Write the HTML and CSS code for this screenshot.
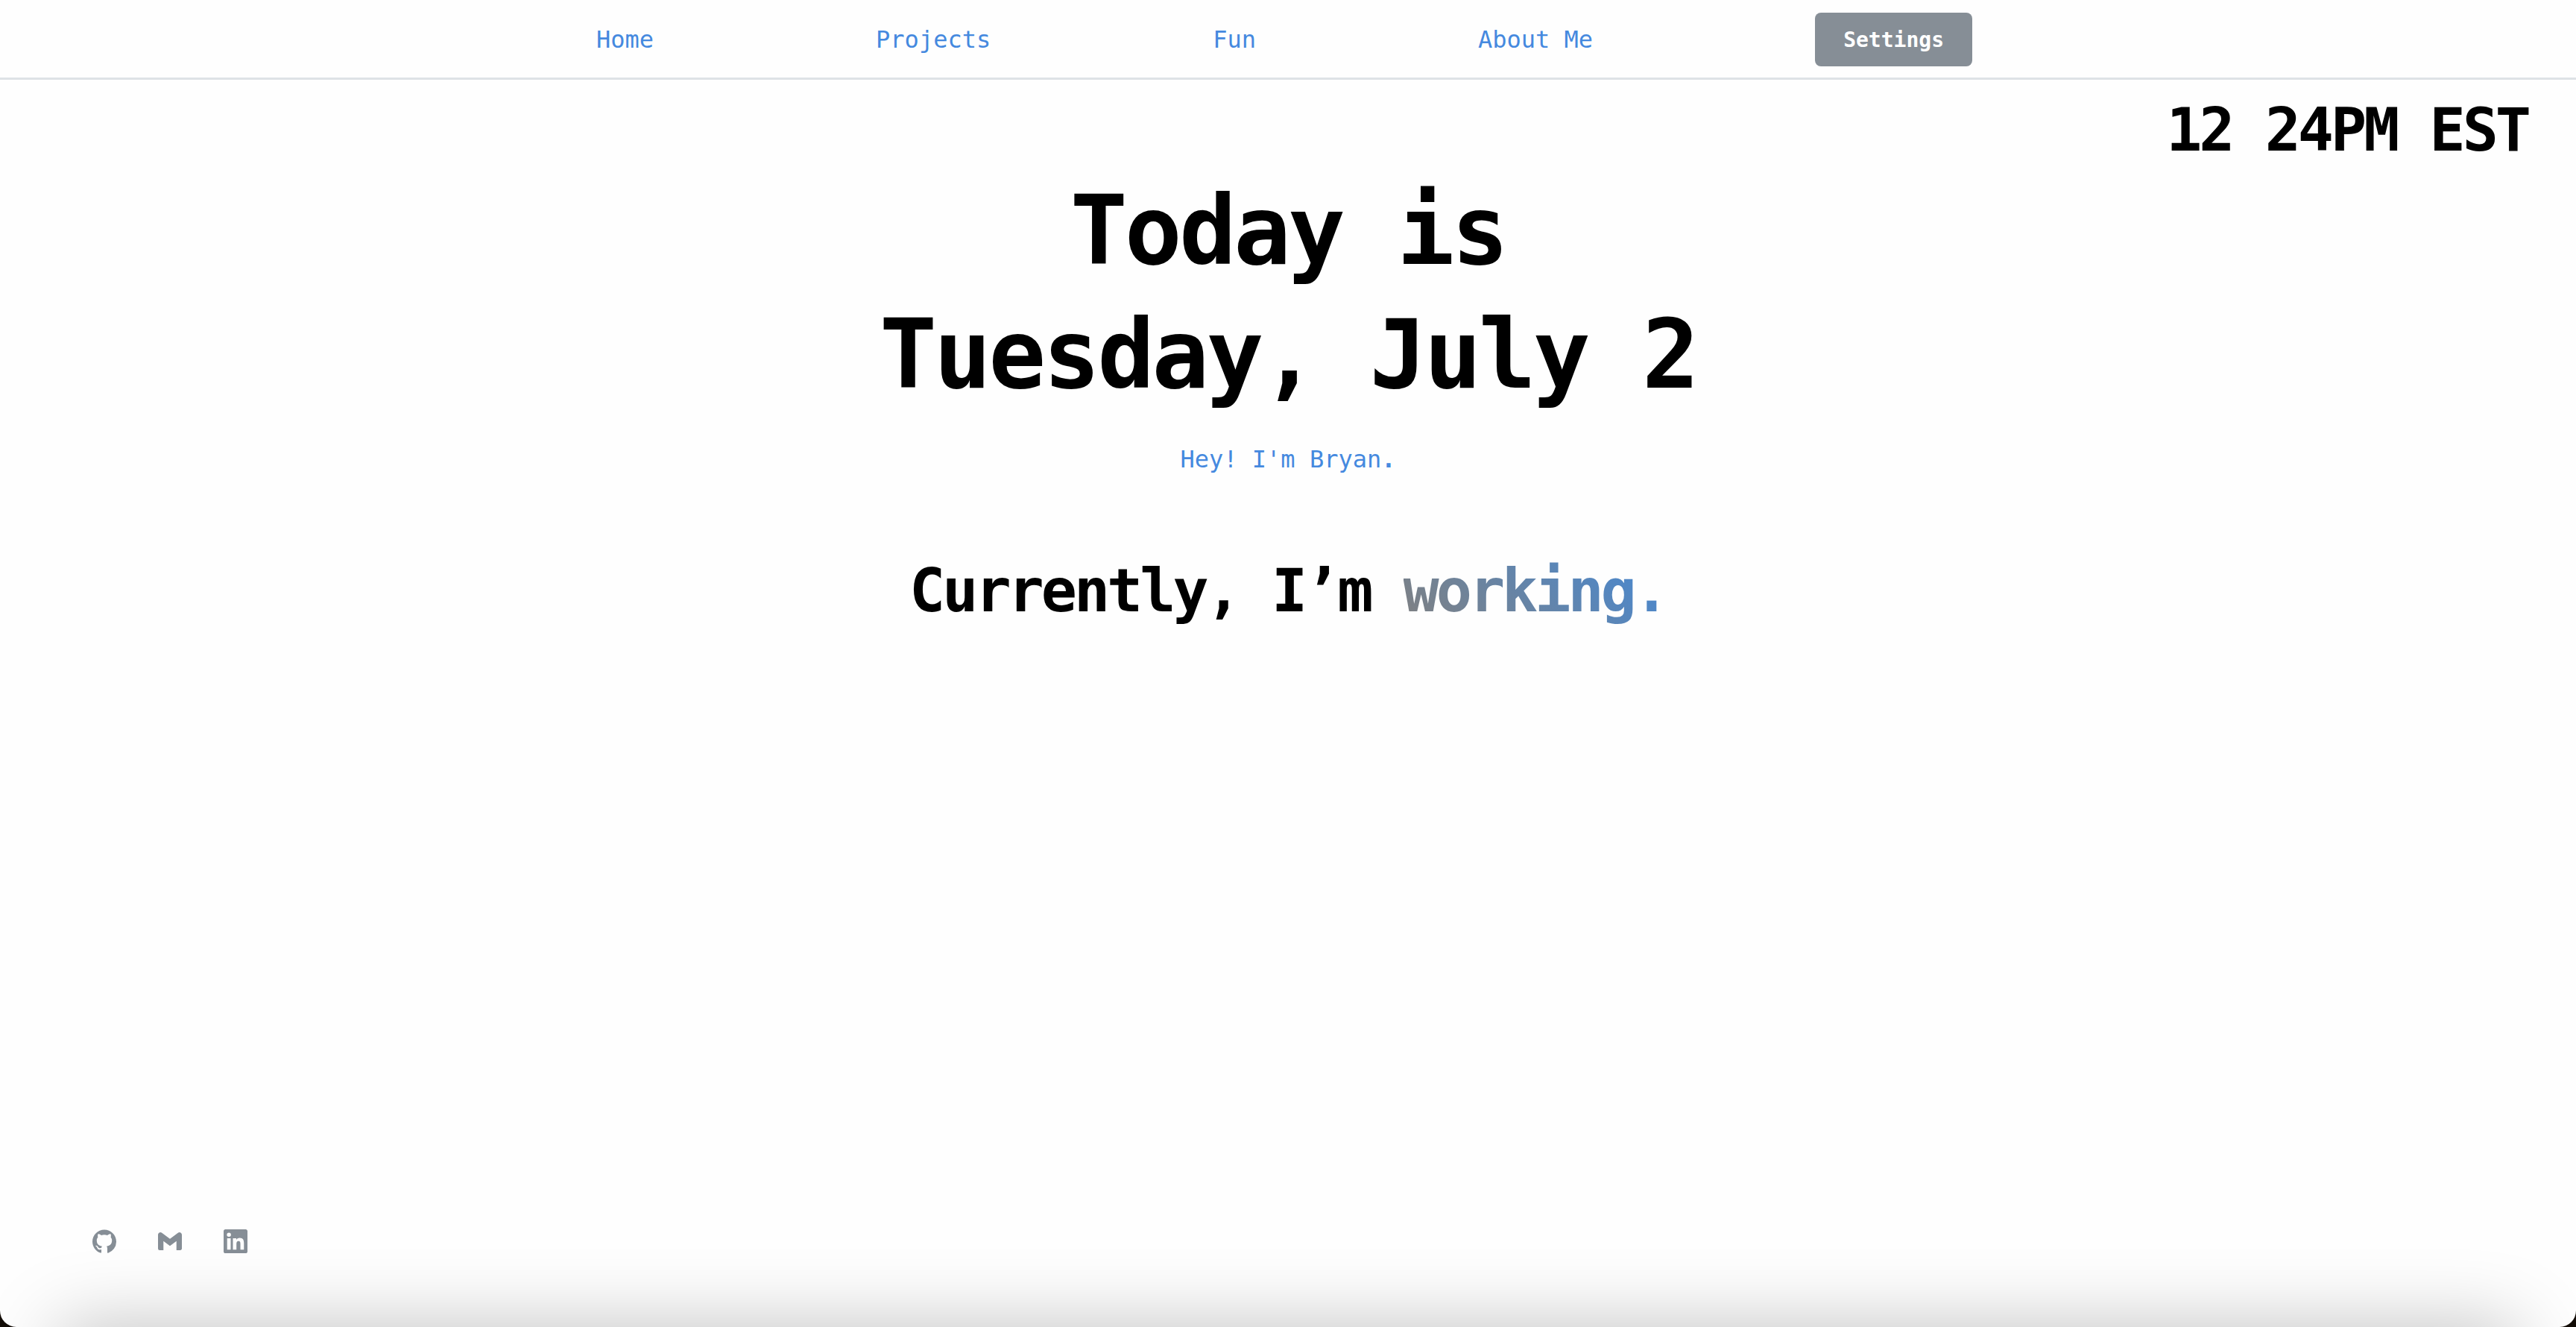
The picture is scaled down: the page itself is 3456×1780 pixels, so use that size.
FILE: index.html
```html
<!DOCTYPE html>
<html lang="en">
<head>
  <meta charset="utf-8">
  <title>Bryan</title>
  <link rel="stylesheet" href="styles.css">
</head>
<body>
  <div class="page">
    <header class="header">
      <nav class="nav">
        <a class="nav-link" href="#home">Home</a>
        <a class="nav-link" href="#projects">Projects</a>
        <a class="nav-link" href="#fun">Fun</a>
        <a class="nav-link" href="#about">About Me</a>
        <button class="settings" type="button">Settings</button>
      </nav>
    </header>
    <time class="clock">12 24PM EST</time>
    <main class="hero">
      <h1 class="title">Today is<br>Tuesday, July 2</h1>
      <p class="greeting">Hey! I'm Bryan<b>.</b></p>
      <h2 class="status">Currently, I’m <span class="activity">working.</span></h2>
    </main>
    <footer class="social">
      <a class="social-link" href="#github" aria-label="GitHub">
        <svg viewBox="0 0 24 24"><path d="M12 .3C5.37.3 0 5.67 0 12.3c0 5.3 3.44 9.8 8.2 11.38.5.1.8-.1.8-.5v-2.9c-3.34.72-4.04-1.42-4.04-1.42-.55-1.38-1.34-1.76-1.34-1.76-1.08-.74.09-.73.09-.73 1.2.09 1.84 1.24 1.84 1.24 1.07 1.83 2.8 1.3 3.49 1 .1-.78.42-1.31.76-1.61-2.66-.3-5.46-1.33-5.46-5.93 0-1.31.46-2.38 1.23-3.22-.12-.3-.53-1.52.12-3.17 0 0 1-.32 3.3 1.23a11.5 11.5 0 0 1 6.02 0c2.28-1.55 3.28-1.23 3.28-1.23.66 1.65.25 2.87.12 3.17.77.84 1.24 1.91 1.24 3.22 0 4.61-2.81 5.62-5.48 5.92.42.36.81 1.1.81 2.22v4c0 .36.22.69.82.57A12 12 0 0 0 24 12.3C24 5.67 18.63.3 12 .3z"/></svg>
      </a>
      <a class="social-link" href="#mail" aria-label="Gmail">
        <svg viewBox="0 0 24 24"><path d="M24 5.457v13.909c0 .904-.732 1.636-1.636 1.636h-3.819V11.73L12 16.64l-6.545-4.91v9.273H1.636A1.636 1.636 0 0 1 0 19.366V5.457c0-2.023 2.309-3.178 3.927-1.964L5.455 4.64 12 9.548l6.545-4.91 1.528-1.145C21.69 2.28 24 3.434 24 5.457z"/></svg>
      </a>
      <a class="social-link" href="#linkedin" aria-label="LinkedIn">
        <svg viewBox="0 0 24 24"><path d="M20.447 20.452h-3.554v-5.569c0-1.328-.027-3.037-1.852-3.037-1.853 0-2.136 1.445-2.136 2.939v5.667H9.351V9h3.414v1.561h.046c.477-.9 1.637-1.85 3.37-1.85 3.601 0 4.267 2.37 4.267 5.455v6.286zM5.337 7.433a2.062 2.062 0 0 1-2.063-2.065 2.064 2.064 0 1 1 2.063 2.065zm1.782 13.019H3.555V9h3.564v11.452zM22.225 0H1.771C.792 0 0 .774 0 1.729v20.542C0 23.227.792 24 1.771 24h20.451C23.2 24 24 23.227 24 22.271V1.729C24 .774 23.2 0 22.222 0h.003z"/></svg>
      </a>
    </footer>
    <div class="shade"></div>
  </div>
</body>
</html>
```
FILE: styles.css
```css
* {
  box-sizing: border-box;
}

body {
  margin: 0;
  background: #120c06;
  color: #000;
  font-family: "DejaVu Sans Mono", monospace;
  font-size: 32px;
}

.page {
  position: relative;
  display: flex;
  flex-direction: column;
  min-height: 100vh;
  overflow: hidden;
  background: #fefefe;
  border-radius: 0 0 22px 22px;
}

.header {
  border-bottom: 3px solid #dee2e6;
}

.nav {
  display: flex;
  align-items: center;
  justify-content: center;
  gap: 298px;
  padding: 17px 10px 15px 0;
}

.nav-link {
  color: #4589df;
  text-decoration: none;
}

.settings {
  height: 72px;
  padding: 0 38px;
  border: 0;
  border-radius: 8px;
  background: #868e96;
  color: #fff;
  font: bold 28px "DejaVu Sans Mono", monospace;
}

.clock {
  align-self: flex-end;
  margin-top: 16px;
  padding-right: 64px;
  font-size: 80px;
  font-weight: bold;
  line-height: 104px;
  letter-spacing: -4px;
}

.hero {
  flex: 1;
  text-align: center;
}

.title {
  margin: 0;
  font-size: 128px;
  line-height: 166px;
  letter-spacing: -4px;
}

.greeting {
  margin: 32px 0 0;
  color: #4589df;
  line-height: 50px;
}

.status {
  margin: 100px 0 0;
  font-size: 80px;
  line-height: 104px;
  letter-spacing: -4px;
}

.activity {
  background: linear-gradient(45deg, #808080, #4589d6);
  background-clip: text;
  color: transparent;
}

.social {
  display: flex;
  gap: 56px;
  padding: 0 124px 99px;
}

.social-link {
  display: flex;
  width: 32px;
  height: 32px;
  color: #868e96;
}

.social-link svg {
  width: 100%;
  fill: currentColor;
}

.shade {
  position: absolute;
  top: 100%;
  left: 80px;
  right: 80px;
  height: 100px;
  box-shadow: 0 0 100px rgba(0, 0, 0, 0.25);
  pointer-events: none;
}
```
